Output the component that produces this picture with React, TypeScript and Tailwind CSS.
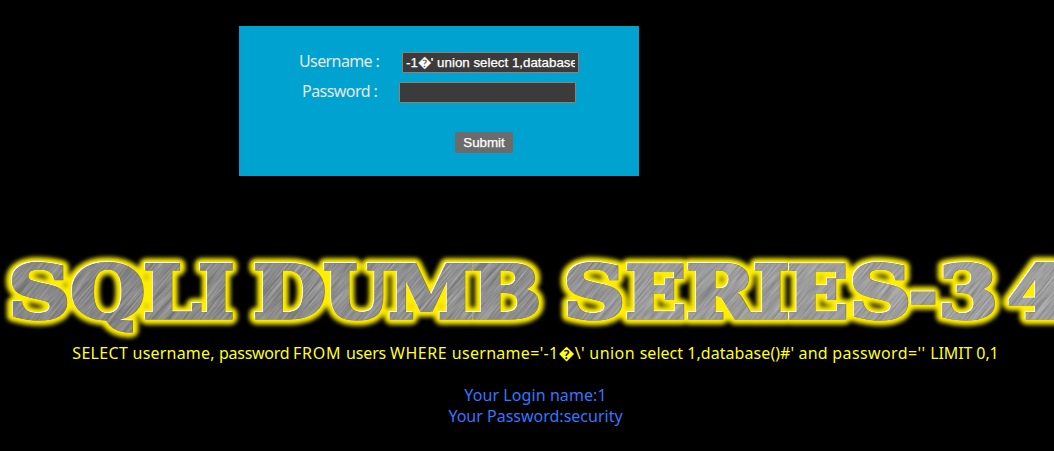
import { useState } from 'react'

type Letter = { char: string; x: number; width: number }

// left edge and advance of every letter in the banner
const LETTERS: Letter[] = [
  { char: 'S', x: 8, width: 62 },
  { char: 'Q', x: 70, width: 75 },
  { char: 'L', x: 143, width: 58 },
  { char: 'I', x: 198, width: 36 },
  { char: 'D', x: 253, width: 73 },
  { char: 'U', x: 323, width: 67 },
  { char: 'M', x: 388, width: 86 },
  { char: 'B', x: 471, width: 70 },
  { char: 'S', x: 563, width: 62 },
  { char: 'E', x: 625, width: 61 },
  { char: 'R', x: 686, width: 69 },
  { char: 'I', x: 753, width: 36 },
  { char: 'E', x: 787, width: 61 },
  { char: 'S', x: 849, width: 62 },
  { char: '-', x: 909, width: 28 },
  { char: '3', x: 938, width: 60 },
  { char: '4', x: 1007, width: 60 },
]

const QUERY = [
  { text: 'SELECT ', className: 'tracking-[0.3px]' },
  { text: 'username, ', className: 'tracking-[0.2px]' },
  { text: 'password ', className: 'tracking-[-0.3px]' },
  { text: 'FROM ', className: 'tracking-[0.7px]' },
  { text: 'users ', className: 'tracking-[-0.15px]' },
  { text: 'WHERE ', className: 'tracking-[0.5px]' },
  { text: "username='-1\uFFFD\\' ", className: 'tracking-[0.3px]' },
  { text: 'union ', className: 'tracking-[0.45px]' },
  { text: 'select ', className: 'tracking-normal' },
  { text: "1,database()#' ", className: 'tracking-[0.07px]' },
  { text: 'and ', className: 'tracking-[0.25px]' },
  { text: "password='' ", className: 'tracking-[0.4px]' },
  { text: 'LIMIT 0,1', className: 'tracking-[-0.1px]' },
]

function BannerLetters() {
  return (
    <>
      {LETTERS.map((l, i) => (
        <text key={i} x={l.x} y={71.5} textLength={l.width} lengthAdjust="spacingAndGlyphs">
          {l.char}
        </text>
      ))}
    </>
  )
}

function Banner() {
  return (
    <svg
      width="1054"
      height="96"
      viewBox="0 0 1054 96"
      className="block font-bold text-[72px] [font-family:'DejaVu_Serif',serif]"
      strokeMiterlimit="2"
    >
      <defs>
        <filter id="glow" x="-10" y="-10" width="1080" height="120" filterUnits="userSpaceOnUse">
          <feGaussianBlur stdDeviation="2" />
        </filter>
        <filter
          id="brushed"
          x="-200"
          y="-900"
          width="1700"
          height="1900"
          filterUnits="userSpaceOnUse"
          colorInterpolationFilters="sRGB"
        >
          <feTurbulence type="fractalNoise" baseFrequency="0.025 0.6" numOctaves="3" seed="4" />
          <feColorMatrix values="0.36 0 0 0 0.385  0.36 0 0 0 0.385  0.36 0 0 0 0.39  0 0 0 0 1" />
        </filter>
        <linearGradient id="sheen" x1="0" x2="1" y1="0" y2="0">
          <stop offset="0" stopColor="#000" stopOpacity="0.06" />
          <stop offset="0.45" stopColor="#000" stopOpacity="0" />
          <stop offset="0.6" stopColor="#fff" stopOpacity="0.1" />
          <stop offset="1" stopColor="#fff" stopOpacity="0.12" />
        </linearGradient>
        <mask id="letters" maskUnits="userSpaceOnUse" x="0" y="0" width="1054" height="96">
          <g fill="#fff" stroke="#fff" strokeWidth="3">
            <BannerLetters />
          </g>
        </mask>
      </defs>
      <g fill="#ffee00" stroke="#ffee00" strokeWidth="13" strokeLinejoin="round" filter="url(#glow)" aria-hidden="true">
        <BannerLetters />
      </g>
      <g fill="#fff" stroke="#fff" strokeWidth="3.2" transform="translate(-0.7 -0.7)" aria-hidden="true">
        <BannerLetters />
      </g>
      <g fill="#7d742c" stroke="#7d742c" strokeWidth="3.2" transform="translate(0.6 0.6)" aria-hidden="true">
        <BannerLetters />
      </g>
      <g mask="url(#letters)">
        <g transform="rotate(-50)">
          <rect x="-200" y="-100" width="1400" height="1100" filter="url(#brushed)" />
        </g>
        <rect width="1054" height="96" fill="url(#sheen)" />
      </g>
    </svg>
  )
}

export default function App() {
  const [username, setUsername] = useState("-1\uFFFD' union select 1,database()#")
  const [password, setPassword] = useState('')

  return (
    <div className="h-[451px] w-[1054px] overflow-hidden bg-black pt-[26px] text-base [font-family:'Noto_Sans',sans-serif]">
      <form
        onSubmit={e => e.preventDefault()}
        className="ml-[239px] h-[150px] w-[400px] bg-[#00a3cf] pt-[26px] text-[#e8e6e3]"
      >
        <div className="flex h-[21px] items-center pl-[60px]">
          <label htmlFor="uname" className="w-[103px] whitespace-pre pb-0.5 leading-[19px] tracking-[-0.6px]">Username :</label>
          <input
            id="uname"
            value={username}
            onChange={e => setUsername(e.target.value)}
            className="h-[21px] w-[177px] rounded-[1px] border border-[#8c8279] bg-[#3b3b3b] px-[3px] pb-0.5 text-[13.333px] leading-4 text-white outline-none [-webkit-text-stroke:0.25px_white] [font-family:'Liberation_Sans',sans-serif]"
          />
        </div>
        <div className="mt-[9px] flex h-[21px] items-center pl-[63px]">
          <label htmlFor="passwd" className="w-[97px] whitespace-pre pb-0.5 leading-[19px] tracking-[-0.55px]">Password :</label>
          <input
            id="passwd"
            value={password}
            onChange={e => setPassword(e.target.value)}
            className="h-[21px] w-[177px] rounded-[1px] border border-[#8c8279] bg-[#3b3b3b] px-[3px] text-[13.333px] leading-4 text-white outline-none [font-family:'Liberation_Sans',sans-serif]"
          />
        </div>
        <button
          type="submit"
          className="mt-[29px] ml-[216px] block h-[21px] w-[58px] rounded-[2px] bg-[#6b6b6b] text-[13.333px] leading-[21px] text-white [-webkit-text-stroke:0.25px_white] [font-family:'Liberation_Sans',sans-serif]"
        >
          Submit
        </button>
      </form>

      <div className="mt-[70px]">
        <Banner />
      </div>

      <div className="flex flex-col items-center pt-px pl-[17px]">
        <p className="h-[21px] whitespace-pre leading-[21px] text-[#ffff1a]">
          {QUERY.map(part => (
            <span key={part.text} className={part.className}>{part.text}</span>
          ))}
        </p>
        <p className="mt-[21px] h-[21px] leading-[21px] tracking-[0.08px] text-[#3377ff]">Your Login name:1</p>
        <p className="h-[21px] leading-[21px] text-[#3377ff]">Your Password:security</p>
      </div>
    </div>
  )
}
